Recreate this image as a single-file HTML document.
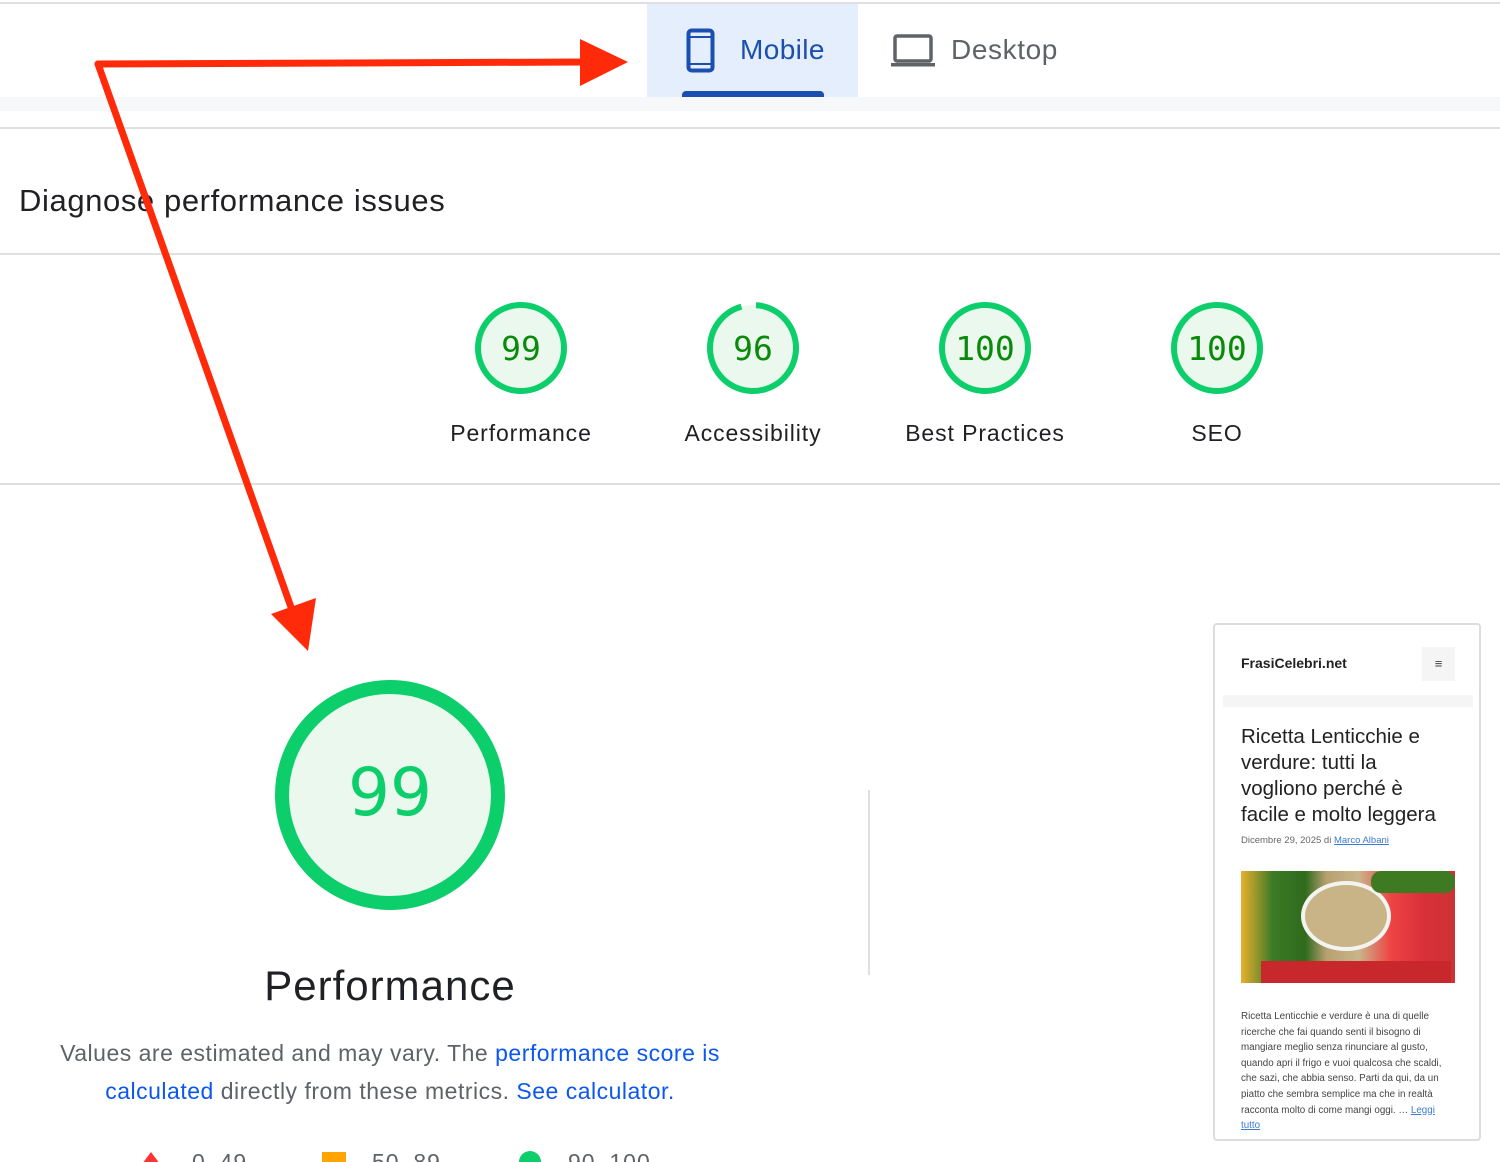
<!DOCTYPE html>
<html><head><meta charset="utf-8"><style>
*{margin:0;padding:0;box-sizing:border-box}
body{width:1500px;height:1162px;overflow:hidden;background:#fff;font-family:"Liberation Sans",sans-serif;position:relative;color:#202124}
.abs{position:absolute}
.lbl{position:absolute;font-size:23px;color:#202124;text-align:center;width:240px;letter-spacing:.9px}
.gnum{font-family:"DejaVu Sans Mono","Liberation Mono",monospace;fill:#0a8a0a}
</style></head><body>
<div class="abs" style="left:0;top:2px;width:1500px;height:2px;background:#e0e0e4"></div>
<div class="abs" style="left:647px;top:4px;width:211px;height:93px;background:#e4eefc"></div>
<div class="abs" style="left:682px;top:91px;width:142px;height:6px;background:#1a4fb0;border-radius:4px 4px 0 0"></div>
<div class="abs" style="left:0;top:97px;width:1500px;height:14px;background:#f6f8fa"></div>
<div class="abs" style="left:0;top:127px;width:1500px;height:2px;background:#e0e0e0"></div>
<svg class="abs" style="left:686px;top:28px" width="30" height="46" viewBox="0 0 30 46"><rect x="2.5" y="2.5" width="24" height="40" rx="3" fill="none" stroke="#1a4fb0" stroke-width="4"/><line x1="3" y1="9" x2="26" y2="9" stroke="#1a4fb0" stroke-width="2"/><line x1="3" y1="36" x2="26" y2="36" stroke="#1a4fb0" stroke-width="2"/></svg>
<div class="abs" style="left:740px;top:34px;font-size:28px;color:#1a4fb0;letter-spacing:.4px">Mobile</div>
<svg class="abs" style="left:890px;top:34px" width="46" height="34" viewBox="0 0 46 34"><rect x="5" y="2" width="36" height="25" rx="2" fill="none" stroke="#5f6368" stroke-width="3.5"/><rect x="1" y="29" width="44" height="3.5" fill="#5f6368"/></svg>
<div class="abs" style="left:951px;top:34px;font-size:28px;color:#5f6368;letter-spacing:.6px">Desktop</div>

<div class="abs" style="left:19px;top:183px;font-size:31px;color:#202124;letter-spacing:.6px">Diagnose performance issues</div>
<div class="abs" style="left:0;top:253px;width:1500px;height:2px;background:#e0e0e0"></div>

<svg class="abs" style="left:0;top:290px" width="1500" height="120">
<g fill="#ebf8ee" stroke="#0cce6b" stroke-width="6">
<circle cx="521" cy="58" r="43"/><circle cx="753" cy="58" r="43" stroke-dasharray="255 15" transform="rotate(-86 753 58)"/><circle cx="985" cy="58" r="43"/><circle cx="1217" cy="58" r="43"/></g>
<g class="gnum" font-size="33" text-anchor="middle"><text x="521" y="70">99</text><text x="753" y="70">96</text><text x="985" y="70">100</text><text x="1217" y="70">100</text></g>
</svg>
<div class="lbl" style="left:401px;top:420px">Performance</div>
<div class="lbl" style="left:633px;top:420px">Accessibility</div>
<div class="lbl" style="left:865px;top:420px">Best Practices</div>
<div class="lbl" style="left:1097px;top:420px">SEO</div>
<div class="abs" style="left:0;top:483px;width:1500px;height:2px;background:#e0e0e0"></div>

<svg class="abs" style="left:270px;top:675px" width="240" height="240"><circle cx="120" cy="120" r="108" fill="#ebf8ee" stroke="#0cce6b" stroke-width="14"/><text x="120" y="140" text-anchor="middle" font-size="66" fill="#0cce6b" font-family="DejaVu Sans,sans-serif">99</text></svg>
<div class="abs" style="left:140px;top:962px;width:500px;text-align:center;font-size:42px;color:#202124;letter-spacing:1px">Performance</div>
<div class="abs" style="left:30px;top:1034px;width:720px;text-align:center;font-size:23px;line-height:38px;color:#5f6368;letter-spacing:.5px">Values are estimated and may vary. The <span style="color:#0b57f0">performance score is calculated</span> directly from these metrics. <span style="color:#0b57f0">See calculator.</span></div>
<svg class="abs" style="left:140px;top:1150px" width="530" height="12"><polygon points="11,2 20,14 2,14" fill="#ff3333"/><rect x="182" y="2" width="24" height="14" fill="#ffa400"/><circle cx="390" cy="12" r="11" fill="#0cce6b"/>
<g font-size="23" fill="#5f6368" letter-spacing="1"><text x="52" y="20">0–49</text><text x="232" y="20">50–89</text><text x="428" y="20">90–100</text></g></svg>

<div class="abs" style="left:868px;top:790px;width:2px;height:185px;background:#e0e0e0"></div>

<div class="abs" style="left:1213px;top:623px;width:268px;height:518px;border:2px solid #ddd;border-radius:4px;background:#fff">
<div class="abs" style="left:26px;top:30px;font-size:14px;font-weight:bold;color:#222">FrasiCelebri.net</div>
<div class="abs" style="left:207px;top:22px;width:33px;height:34px;background:#f5f5f5;text-align:center;line-height:34px;font-size:13px;color:#444">≡</div>
<div class="abs" style="left:8px;top:70px;width:250px;height:12px;background:#f5f5f5"></div>
<div class="abs" style="left:26px;top:99px;width:210px;font-size:20.5px;line-height:26px;color:#222">Ricetta Lenticchie e verdure: tutti la vogliono perché è facile e molto leggera</div>
<div class="abs" style="left:26px;top:210px;font-size:9.5px;color:#666">Dicembre 29, 2025 di <span style="color:#3a7bd5;text-decoration:underline">Marco Albani</span></div>
<div class="abs" style="left:26px;top:246px;width:214px;height:112px;background:linear-gradient(90deg,#e8b030 0,#3c7a25 15%,#2f6a1e 30%,#b8a070 40%,#c9b58a 55%,#e44 70%,#d9303a 85%,#c33 100%);overflow:hidden">
<div class="abs" style="left:60px;top:10px;width:90px;height:70px;border-radius:50%;background:#c8b487;border:4px solid #f3f3f0"></div>
<div class="abs" style="left:130px;top:0;width:84px;height:22px;background:#3e7a22;border-radius:10px"></div>
<div class="abs" style="left:20px;top:90px;width:190px;height:22px;background:#c8282c"></div></div>
<div class="abs" style="left:26px;top:384px;width:214px;font-size:9.8px;line-height:15.6px;color:#444">Ricetta Lenticchie e verdure è una di quelle ricerche che fai quando senti il bisogno di mangiare meglio senza rinunciare al gusto, quando apri il frigo e vuoi qualcosa che scaldi, che sazi, che abbia senso. Parti da qui, da un piatto che sembra semplice ma che in realtà racconta molto di come mangi oggi. … <span style="color:#3a7bd5;text-decoration:underline">Leggi tutto</span></div>
</div>

<svg class="abs" style="left:0;top:0" width="1500" height="1162">
<g stroke="#ff2a0a" stroke-width="7" fill="none" stroke-linecap="round"><line x1="98" y1="64" x2="585" y2="62"/><line x1="98" y1="64" x2="292" y2="610"/></g>
<polygon points="628,62 580,39 580,86" fill="#ff2a0a"/>
<polygon points="308,651 271,614 316,598" fill="#ff2a0a"/>
</svg>
</body></html>
